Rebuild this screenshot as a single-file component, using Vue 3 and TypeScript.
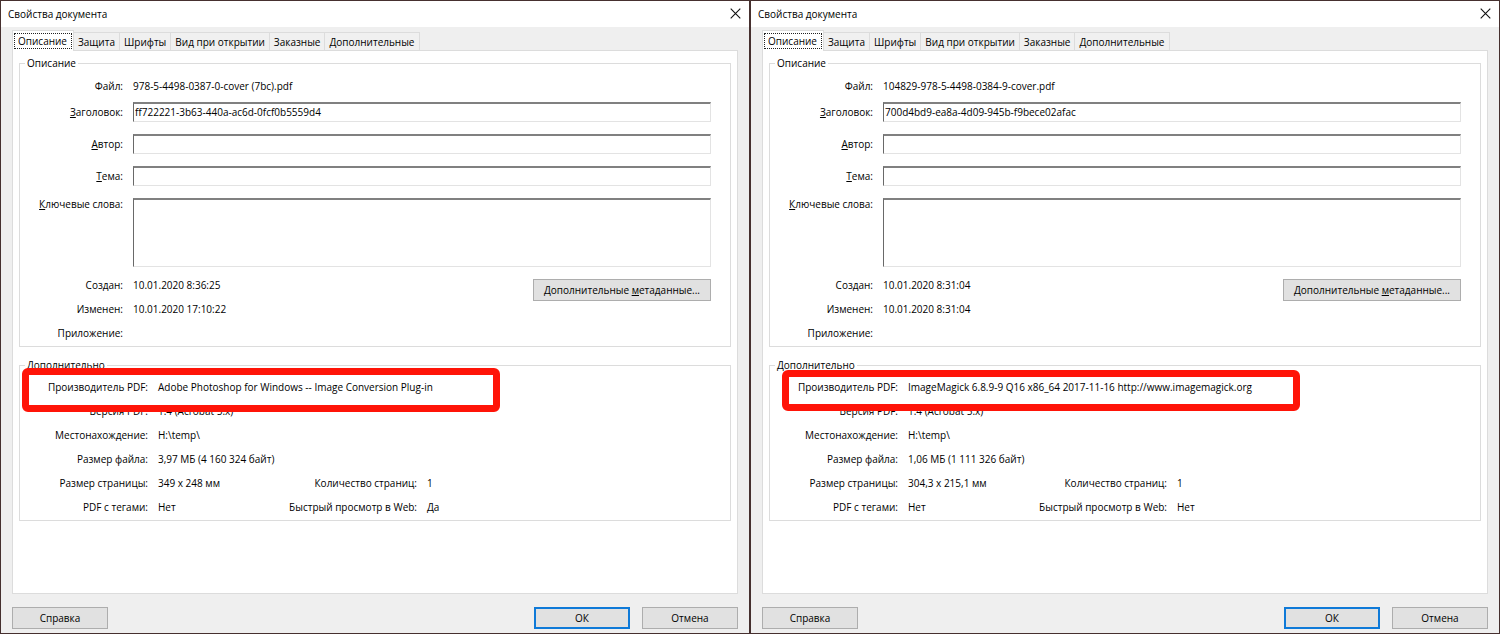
<script setup lang="ts">
interface DialogData {
  id: string
  file: string
  title: string
  created: string
  modified: string
  producer: string
  size: string
  pageSize: string
  webView: string
  mark: string
}

const tabs: string[] = ['Описание', 'Защита', 'Шрифты', 'Вид при открытии', 'Заказные', 'Дополнительные']

const dialogs: DialogData[] = [
  {
    id: 'a',
    file: '978-5-4498-0387-0-cover (7bc).pdf',
    title: 'ff722221-3b63-440a-ac6d-0fcf0b5559d4',
    created: '10.01.2020 8:36:25',
    modified: '10.01.2020 17:10:22',
    producer: 'Adobe Photoshop for Windows -- Image Conversion Plug-in',
    size: '3,97 МБ (4 160 324 байт)',
    pageSize: '349 x 248 мм',
    webView: 'Да',
    mark: 'mark-wide',
  },
  {
    id: 'b',
    file: '104829-978-5-4498-0384-9-cover.pdf',
    title: '700d4bd9-ea8a-4d09-945b-f9bece02afac',
    created: '10.01.2020 8:31:04',
    modified: '10.01.2020 8:31:04',
    producer: 'ImageMagick 6.8.9-9 Q16 x86_64 2017-11-16 http://www.imagemagick.org',
    size: '1,06 МБ (1 111 326 байт)',
    pageSize: '304,3 x 215,1 мм',
    webView: 'Нет',
    mark: 'mark-inset',
  },
]
</script>

<template>
  <main class="desktop">
    <section v-for="d in dialogs" :key="d.id" class="dialog" role="dialog" :aria-labelledby="'cap-' + d.id">
      <header class="titlebar">
        <h1 :id="'cap-' + d.id" class="caption">Свойства документа</h1>
        <button class="close" type="button" aria-label="Закрыть">
          <svg width="11" height="11" viewBox="0 0 11 11"><path d="M0.7 0.7L10.3 10.3M10.3 0.7L0.7 10.3" stroke="#111" stroke-width="1.1" fill="none" /></svg>
        </button>
      </header>

      <div class="body">
        <div class="tabs" role="tablist">
          <button v-for="(t, i) in tabs" :key="t" type="button" role="tab" class="tab" :class="{ active: i === 0 }" :aria-selected="i === 0">
            <span class="tab-text">{{ t }}</span>
          </button>
        </div>

        <div class="panel" role="tabpanel">
          <fieldset class="group main-group">
            <legend>Описание</legend>
            <div class="row">
              <span class="name">Файл:</span><span>{{ d.file }}</span>
            </div>
            <div class="fields">
              <div class="field">
                <label class="name" :for="'title-' + d.id"><u>З</u>аголовок:</label>
                <input :id="'title-' + d.id" class="box" type="text" :value="d.title" />
              </div>
              <div class="field">
                <label class="name" :for="'author-' + d.id"><u>А</u>втор:</label>
                <input :id="'author-' + d.id" class="box" type="text" />
              </div>
              <div class="field">
                <label class="name" :for="'subject-' + d.id"><u>Т</u>ема:</label>
                <input :id="'subject-' + d.id" class="box" type="text" />
              </div>
              <div class="field keywords">
                <label class="name" :for="'keys-' + d.id"><u>К</u>лючевые слова:</label>
                <textarea :id="'keys-' + d.id" class="box"></textarea>
              </div>
            </div>
            <div class="foot">
              <div class="rows">
                <div class="row"><span class="name">Создан:</span><span>{{ d.created }}</span></div>
                <div class="row"><span class="name">Изменен:</span><span>{{ d.modified }}</span></div>
                <div class="row"><span class="name">Приложение:</span></div>
              </div>
              <button type="button" class="btn meta">Дополнительные&nbsp;<u>м</u>етаданные...</button>
            </div>
          </fieldset>

          <fieldset class="group extra-group">
            <legend>Дополнительно</legend>
            <div class="rows">
              <div class="row marked">
                <span class="name">Производитель PDF:</span><span>{{ d.producer }}</span>
                <i class="mark" :class="d.mark"></i>
              </div>
              <div class="row"><span class="name">Версия PDF:</span><span>1.4 (Acrobat 5.x)</span></div>
              <div class="row"><span class="name">Местонахождение:</span><span>H:\temp\</span></div>
              <div class="row"><span class="name">Размер файла:</span><span>{{ d.size }}</span></div>
              <div class="row">
                <span class="name">Размер страницы:</span><span class="short">{{ d.pageSize }}</span>
                <span class="name second">Количество страниц:</span><span>1</span>
              </div>
              <div class="row">
                <span class="name">PDF с тегами:</span><span class="short">Нет</span>
                <span class="name second">Быстрый просмотр в Web:</span><span>{{ d.webView }}</span>
              </div>
            </div>
          </fieldset>
        </div>

        <footer class="actions">
          <button type="button" class="btn help">Справка</button>
          <button type="button" class="btn default">ОК</button>
          <button type="button" class="btn">Отмена</button>
        </footer>
      </div>
    </section>
  </main>
</template>

<style>
body {
  margin: 0;
}
</style>

<style scoped>
* {
  box-sizing: border-box;
}
.desktop {
  display: grid;
  grid-template-columns: 1fr 1fr;
  min-height: 100vh;
  font-family: "Open Sans", "Noto Sans", sans-serif;
  font-size: 10px;
  line-height: 16px;
  color: #000;
  background: #efefef;
}
button,
input,
textarea {
  font: inherit;
  color: inherit;
  margin: 0;
  border-radius: 0;
}
.dialog {
  display: flex;
  flex-direction: column;
  border: 1px solid #46302f;
  white-space: nowrap;
}
.titlebar {
  display: flex;
  align-items: center;
  justify-content: space-between;
  height: 26px;
  padding: 0 7px;
  background: #fff;
}
.caption {
  margin: 0;
  font-size: inherit;
  font-weight: normal;
}
.close {
  display: flex;
  padding: 0 1px 2px;
  border: 0;
  background: none;
}
.body {
  flex: 1;
  display: flex;
  flex-direction: column;
  padding: 3px 11px 4px;
}
.tabs {
  display: flex;
  align-items: flex-end;
  height: 20px;
}
.tab {
  height: 18px;
  padding: 0 4px;
  line-height: 18px;
  border: 1px solid #dcdcdc;
  border-width: 1px 1px 0 0;
  background: #f0f0f0;
}
.tab.active {
  height: 21px;
  margin-bottom: -1px;
  padding: 1px;
  border-left-width: 1px;
  background: #fff;
  z-index: 1;
}
.active .tab-text {
  display: block;
  height: 16px;
  padding: 0 4px 0 3px;
  line-height: 14px;
  border: 1px dotted #222;
}
.panel {
  flex: 1;
  padding: 4px 6px;
  border: 1px solid #dcdcdc;
  background: #fff;
}
.group {
  min-width: 0;
  margin: 0;
  border: 1px solid #dcdcdc;
}
.main-group {
  padding: 7px 19px 5px 0;
  margin-bottom: 10px;
}
.extra-group {
  padding: 6px 19px 5px 0;
}
legend {
  margin-left: 5px;
  padding: 0 2px;
}
.row,
.field {
  display: flex;
  gap: 10px;
}
.name {
  flex: none;
  width: 103px;
  text-align: right;
}
.rows {
  display: flex;
  flex-direction: column;
  gap: 8px;
}
.row {
  height: 16px;
}
.fields {
  display: flex;
  flex-direction: column;
  gap: 12px;
  margin: 8px 0 10px;
}
.field {
  align-items: center;
}
.keywords {
  align-items: flex-start;
}
.keywords .name {
  line-height: 12px;
}
.box {
  flex: 1;
  min-width: 0;
  height: 20px;
  padding: 0 1px 1px;
  border: 1px solid #e3e3e3;
  border-top: 2px solid #808080;
  border-left: 1px solid #696969;
  background: #fff;
  outline: 0;
}
textarea.box {
  height: 69px;
  resize: none;
}
.foot {
  display: flex;
  align-items: flex-start;
  justify-content: space-between;
}
.btn {
  display: flex;
  align-items: center;
  justify-content: center;
  width: 96px;
  height: 22px;
  padding: 0;
  border: 1px solid #adadad;
  background: #e1e1e1;
}
.meta {
  width: 178px;
  margin-top: 2px;
}
.extra-group .name {
  width: 128px;
}
.extra-group .short {
  width: 98px;
}
.extra-group .second {
  width: 151px;
}
.marked {
  position: relative;
}
.mark {
  position: absolute;
  z-index: 2;
  border: 7px solid #ff1408;
  border-radius: 6px;
}
.mark-wide {
  left: 2px;
  top: -11px;
  width: 478px;
  height: 44px;
}
.mark-inset {
  left: 12px;
  top: -9px;
  width: 518px;
  height: 41px;
}
.actions {
  display: flex;
  gap: 12px;
  margin-top: 13px;
}
.help {
  margin-right: auto;
}
.default {
  border: 2px solid #0f7ad8;
}
</style>
